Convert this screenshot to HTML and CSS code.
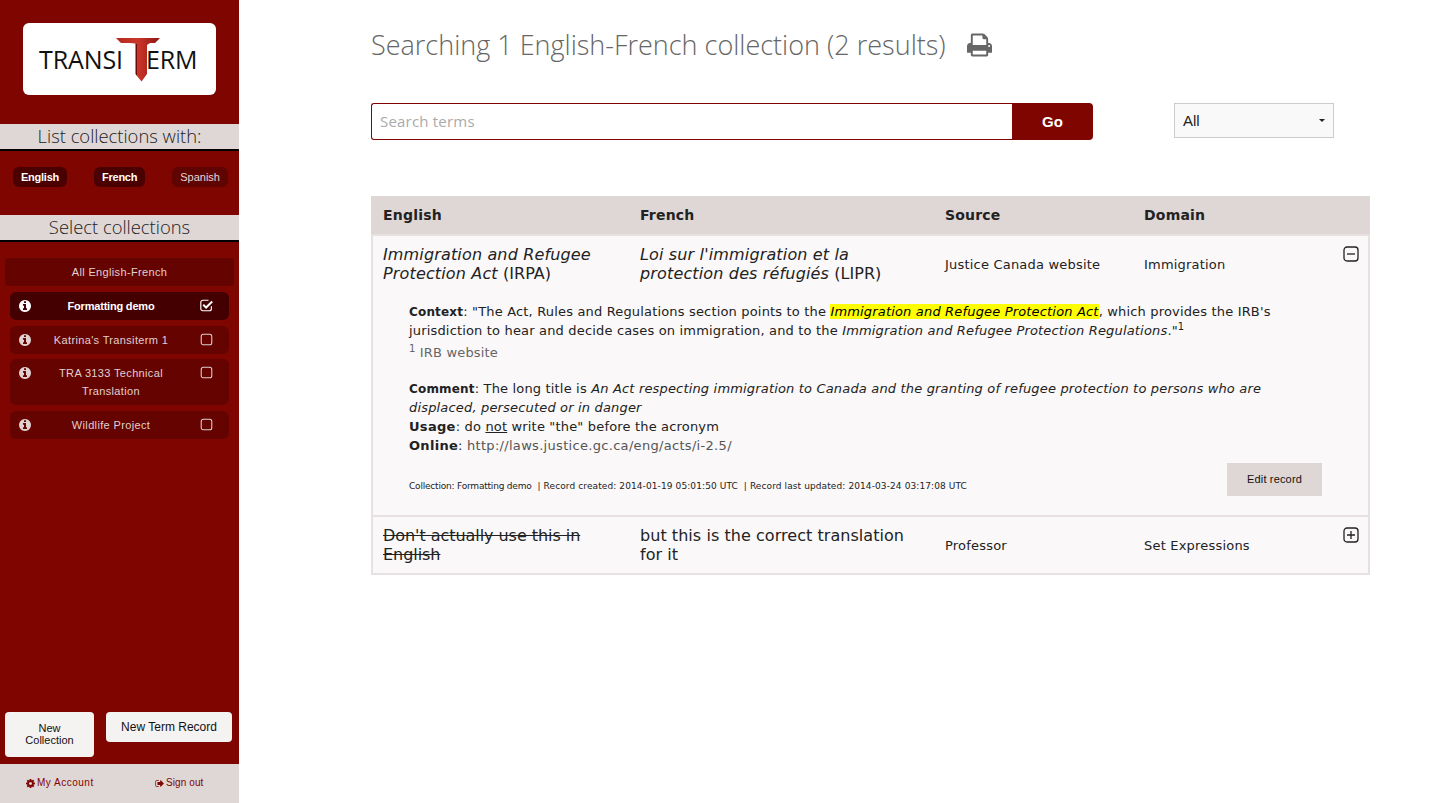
FILE: index.html
```html
<!DOCTYPE html>
<html lang="en">
<head>
    <meta charset="UTF-8">
    <title>Transiterm</title>
    <link rel="stylesheet" href="styles.css">
</head>
<body>
    <svg class="icon-defs" xmlns="http://www.w3.org/2000/svg">
        <symbol id="i-info" viewBox="0 0 1536 1536"><path d="M1024 1248v-160q0-14-9-23t-23-9h-96v-512q0-14-9-23t-23-9h-320q-14 0-23 9t-9 23v160q0 14 9 23t23 9h96v320h-96q-14 0-23 9t-9 23v160q0 14 9 23t23 9h448q14 0 23-9t9-23zm-128-896v-160q0-14-9-23t-23-9h-192q-14 0-23 9t-9 23v160q0 14 9 23t23 9h192q14 0 23-9t9-23zm640 416q0 209-103 385.500t-279.500 279.500-385.500 103-385.500-103-279.500-279.500-103-385.500 103-385.500 279.500-279.500 385.500-103 385.500 103 279.500 279.500 103 385.500z"/></symbol>
        <symbol id="i-cog" viewBox="128 128 1536 1536"><path d="M1152 896q0-106-75-181t-181-75-181 75-75 181 75 181 181 75 181-75 75-181zm512-109v222q0 12-8 23t-20 13l-185 28q-19 54-39 91 35 50 107 138 10 12 10 25t-9 23q-27 37-99 108t-94 71q-12 0-26-9l-138-108q-44 23-91 38-16 136-29 186-7 28-36 28h-222q-14 0-24.500-8.500t-11.500-21.500l-28-184q-49-16-90-37l-141 107q-10 9-25 9-14 0-25-11-126-114-165-168-7-10-7-23 0-12 8-23 15-21 51-66.500t54-70.500q-27-50-41-99l-183-27q-13-2-21-12.500t-8-23.500v-222q0-12 8-23t19-13l186-28q14-46 39-92-40-57-107-138-10-12-10-24 0-10 9-23 26-36 98.500-107.500t94.500-71.500q13 0 26 10l138 107q44-23 91-38 16-136 29-186 7-28 36-28h222q14 0 24.500 8.500t11.500 21.500l28 184q49 16 90 37l142-107q9-9 24-9 13 0 25 10 129 119 165 170 7 8 7 22 0 12-8 23-15 21-51 66.500t-54 70.500q26 50 41 98l183 28q13 2 21 12.500t8 23.500z"/></symbol>
        <symbol id="i-signout" viewBox="0 128 1664 1536"><path d="M704 1440q0 4 1 20t.5 26.500-3 23.500-10 19.500-20.500 6.500h-320q-119 0-203.500-84.500t-84.500-203.500v-704q0-119 84.500-203.500t203.500-84.500h320q13 0 22.500 9.500t9.500 22.500q0 4 1 20t.5 26.500-3 23.500-10 19.500-20.500 6.500h-320q-66 0-113 47t-47 113v704q0 66 47 113t113 47h312l11.500 1 11.500 3 8 5.500 7 9 2 13.500zm928-544q0 26-19 45l-544 544q-19 19-45 19t-45-19-19-45v-288h-448q-26 0-45-19t-19-45v-384q0-26 19-45t45-19h448v-288q0-26 19-45t45-19 45 19l544 544q19 19 19 45z"/></symbol>
        <symbol id="i-print" viewBox="0 128 1664 1536"><path d="M384 1536h896v-256h-896v256zm0-640h896v-384h-160q-40 0-68-28t-28-68v-160h-640v640zm1152 64q0-26-19-45t-45-19-45 19-19 45 19 45 45 19 45-19 19-45zm128 0v416q0 13-9.500 22.500t-22.500 9.500h-224v160q0 40-28 68t-68 28h-960q-40 0-68-28t-28-68v-160h-224q-13 0-22.500-9.500t-9.500-22.500v-416q0-79 56.500-135.500t135.500-56.500h64v-544q0-40 28-68t68-28h672q40 0 88 20t76 48l152 152q28 28 48 76t20 88v256h64q79 0 135.500 56.500t56.500 135.500z"/></symbol>
        <symbol id="i-box" viewBox="0 0 16 16"><rect x="1.500" y="1.500" width="13" height="13" rx="2.500" fill="none" stroke="currentColor" stroke-width="1.300"/></symbol>
        <symbol id="i-boxcheck" viewBox="0 0 16 16"><path d="M14 9v3a2.500 2.500 0 0 1-2.500 2.500h-8A2.500 2.500 0 0 1 1 12V4a2.500 2.500 0 0 1 2.500-2.500h7" fill="none" stroke="currentColor" stroke-width="1.400"/><path d="M4 7l3.500 3.500L15 3" fill="none" stroke="currentColor" stroke-width="2.400"/></symbol>
        <symbol id="i-minus" viewBox="0 0 16 16"><rect x="1" y="1" width="14" height="14" rx="3" fill="none" stroke="currentColor" stroke-width="1.300"/><path d="M4 8h8" stroke="currentColor" stroke-width="1.300"/></symbol>
        <symbol id="i-plus" viewBox="0 0 16 16"><rect x="1" y="1" width="14" height="14" rx="3" fill="none" stroke="currentColor" stroke-width="1.300"/><path d="M4 8h8M8 4v8" stroke="currentColor" stroke-width="1.300"/></symbol>
    </svg>

    <div class="page">
        <aside class="sidebar">
            <div class="logo">
                <span class="logo-text">TRANSI</span>
                <svg class="logo-t" viewBox="0 0 44 44" xmlns="http://www.w3.org/2000/svg">
                    <defs>
                        <linearGradient id="logoRed" x1="0" y1="0" x2="1" y2="0">
                            <stop offset="0" stop-color="#b5281e"/>
                            <stop offset="0.5" stop-color="#c9362a"/>
                            <stop offset="1" stop-color="#8e1510"/>
                        </linearGradient>
                    </defs>
                    <path d="M0 0h44l-5 5h-5l-3 2v29l-5.500 7.500L21 38V7l-2-1.500-5-.5H5z" fill="url(#logoRed)"/>
                    <path d="M19.500 6H21v32l-1.500-2z" fill="#6b0a08"/>
                </svg>
                <span class="logo-text">ERM</span>
            </div>

            <h2 class="side-title side-title-first">List collections with:</h2>
            <div class="lang-pills">
                <a class="pill active">English</a>
                <a class="pill active">French</a>
                <a class="pill">Spanish</a>
            </div>

            <h2 class="side-title">Select collections</h2>
            <a class="all-collections">All English-French</a>
            <ul class="collections">
                <li class="collection selected">
                    <svg class="ico-info"><use href="#i-info"/></svg>
                    <span class="collection-name">Formatting demo</span>
                    <svg class="ico-box"><use href="#i-boxcheck"/></svg>
                </li>
                <li class="collection">
                    <svg class="ico-info"><use href="#i-info"/></svg>
                    <span class="collection-name">Katrina's Transiterm 1</span>
                    <svg class="ico-box"><use href="#i-box"/></svg>
                </li>
                <li class="collection collection-tall">
                    <svg class="ico-info"><use href="#i-info"/></svg>
                    <span class="collection-name">TRA 3133 Technical Translation</span>
                    <svg class="ico-box"><use href="#i-box"/></svg>
                </li>
                <li class="collection">
                    <svg class="ico-info"><use href="#i-info"/></svg>
                    <span class="collection-name">Wildlife Project</span>
                    <svg class="ico-box"><use href="#i-box"/></svg>
                </li>
            </ul>

            <div class="side-actions">
                <a class="side-btn side-btn-collection">New Collection</a>
                <a class="side-btn side-btn-term">New Term Record</a>
            </div>
            <div class="side-footer">
                <a><svg class="ico-small"><use href="#i-cog"/></svg>My Account</a>
                <a><svg class="ico-small"><use href="#i-signout"/></svg>Sign out</a>
            </div>
        </aside>

        <main class="content">
            <div class="heading">
                <h1>Searching 1 English-French collection (2 results)</h1>
                <svg class="ico-print"><use href="#i-print"/></svg>
            </div>

            <div class="search-row">
                <form class="search-form">
                    <input class="search-input" type="text" placeholder="Search terms">
                    <button class="search-go" type="button">Go</button>
                </form>
                <div class="domain-select">
                    <span>All</span>
                    <i class="caret"></i>
                </div>
            </div>

            <table class="results">
                <colgroup>
                    <col class="col-english">
                    <col class="col-french">
                    <col class="col-source">
                    <col class="col-domain">
                    <col class="col-toggle">
                </colgroup>
                <thead>
                    <tr>
                        <th>English</th>
                        <th>French</th>
                        <th>Source</th>
                        <th>Domain</th>
                        <th></th>
                    </tr>
                </thead>
                <tbody>
                    <tr class="row-main open">
                        <td class="term"><em>Immigration and Refugee Protection Act</em> (IRPA)</td>
                        <td class="term"><em>Loi sur l'immigration et la protection des réfugiés</em> (LIPR)</td>
                        <td>Justice Canada website</td>
                        <td>Immigration</td>
                        <td class="toggle"><svg class="ico-toggle"><use href="#i-minus"/></svg></td>
                    </tr>
                    <tr class="row-detail">
                        <td colspan="5">
                            <p class="detail-text"><b>Context</b>: "The Act, Rules and Regulations section points to the <mark><em>Immigration and Refugee Protection Act</em></mark>, which provides the IRB's jurisdiction to hear and decide cases on immigration, and to the <em>Immigration and Refugee Protection Regulations</em>."<sup>1</sup></p>
                            <p class="footnote"><sup>1</sup> <span>IRB website</span></p>
                            <p class="detail-text detail-notes"><b>Comment</b>: The long title is <em>An Act respecting immigration to Canada and the granting of refugee protection to persons who are displaced, persecuted or in danger</em><br>
                            <b class="big">Usage</b>: do <u>not</u> write "the" before the acronym<br>
                            <b class="big">Online</b>: <a class="link">http://laws.justice.gc.ca/eng/acts/i-2.5/</a></p>
                            <div class="record-meta">
                                <span class="meta-text"><span class="meta-collection">Collection: Formatting demo</span> &nbsp;| Record created: 2014-01-19 05:01:50 UTC &nbsp;| Record last updated: 2014-03-24 03:17:08 UTC</span>
                                <a class="edit-btn">Edit record</a>
                            </div>
                        </td>
                    </tr>
                    <tr class="row-main last">
                        <td class="term"><s>Don't actually use this in English</s></td>
                        <td class="term">but this is the correct translation for it</td>
                        <td>Professor</td>
                        <td>Set Expressions</td>
                        <td class="toggle"><svg class="ico-toggle"><use href="#i-plus"/></svg></td>
                    </tr>
                </tbody>
            </table>
        </main>
    </div>
</body>
</html>
```

FILE: styles.css
```css
* {
    box-sizing: border-box;
}
html, body {
    margin: 0;
    height: 100%;
}
body {
    font-family: "DejaVu Sans", Verdana, sans-serif;
    color: #222;
    background: #fff;
    overflow: hidden;
}
.icon-defs {
    display: none;
}
.page {
    display: flex;
    height: 803px;
}

/* sidebar */
.sidebar {
    width: 239px;
    flex: none;
    display: flex;
    flex-direction: column;
    background: #7f0500;
    font-family: "Liberation Sans", Arial, sans-serif;
}
.logo {
    display: flex;
    align-items: center;
    width: 193px;
    height: 72px;
    margin: 23px 0 0 23px;
    padding: 1px 0 0 16px;
    background: #fff;
    border-radius: 6px;
}
.logo-text {
    font-family: "Open Sans", sans-serif;
    font-size: 25px;
    line-height: 1;
    letter-spacing: -0.1px;
    color: #111;
}
.logo-t {
    width: 44px;
    height: 44px;
    flex: none;
    margin: 0 -14px 0 -7px;
}
.side-title {
    height: 27px;
    margin: 0;
    background: #dfd6d6;
    border-bottom: 2px solid #000;
    font-family: "Open Sans", sans-serif;
    font-size: 18.4px;
    font-weight: 300;
    line-height: 24px;
    text-align: center;
    color: #222;
}
.side-title-first {
    margin-top: 29px;
}
.lang-pills {
    display: flex;
    justify-content: space-between;
    height: 64px;
    padding: 16px 11px 0 13px;
}
.pill {
    height: 20px;
    padding: 0 8px;
    border-radius: 6px;
    background: #600402;
    color: #e4d6d6;
    font-size: 11px;
    line-height: 20px;
}
.pill.active {
    background: #4a0000;
    color: #fff;
    font-weight: 700;
    letter-spacing: -0.25px;
}
.all-collections {
    display: block;
    height: 28px;
    margin: 16px 5px 6px;
    border-radius: 4px;
    background: #650300;
    color: #e0d0d0;
    font-size: 11px;
    letter-spacing: 0.35px;
    line-height: 28px;
    text-align: center;
}
.collections {
    list-style: none;
    margin: 0;
    padding: 0 10px;
    display: flex;
    flex-direction: column;
    gap: 6px;
}
.collection {
    display: flex;
    align-items: flex-start;
    min-height: 28px;
    padding: 5px 16px 4px 9px;
    border-radius: 6px;
    background: #650300;
    color: #e0d0d0;
    font-size: 11px;
    letter-spacing: 0.35px;
    line-height: 18px;
}
.collection-tall {
    margin-top: -1px;
    padding-bottom: 5px;
}
.collection.selected {
    background: #440000;
    color: #fff;
    font-weight: 700;
    letter-spacing: -0.2px;
}
.collection-name {
    flex: 1;
    padding: 0 17px 0 8px;
    text-align: center;
}
.ico-info {
    width: 12px;
    height: 12px;
    margin-top: 3px;
    flex: none;
    fill: currentColor;
}
.ico-box {
    width: 13px;
    height: 13px;
    margin-top: 2px;
    flex: none;
}
.side-actions {
    display: flex;
    align-items: flex-start;
    justify-content: space-between;
    margin-top: auto;
    padding: 0 7px 7px 5px;
}
.side-btn {
    border-radius: 4px;
    background: #f5f2f2;
    color: #111;
    text-align: center;
}
.side-btn-collection {
    width: 89px;
    height: 45px;
    padding: 10px 16px 0;
    font-size: 11px;
    line-height: 12px;
}
.side-btn-term {
    width: 126px;
    height: 30px;
    font-size: 12px;
    line-height: 30px;
}
.side-footer {
    display: flex;
    height: 39px;
    padding: 12px 0 0 26px;
    background: #dfd6d6;
    color: #7f0500;
    font-size: 10px;
    line-height: 14px;
}
.side-footer a {
    display: flex;
    align-items: center;
    gap: 2px;
    height: 14px;
    letter-spacing: 0.1px;
}
.side-footer a:first-child {
    width: 129px;
    letter-spacing: 0.5px;
}
.ico-small {
    width: 9px;
    height: 9px;
    fill: currentColor;
}

/* main */
.content {
    flex: 1;
    padding: 23px 66px 0 132px;
}
.heading {
    display: flex;
    align-items: center;
    gap: 21px;
    height: 44px;
}
.heading h1 {
    margin: 0;
    font-family: "Open Sans", sans-serif;
    font-size: 27px;
    font-weight: 300;
    line-height: 44px;
    color: #666;
}
.ico-print {
    width: 25px;
    height: 24px;
    fill: #666;
}
.search-row {
    display: flex;
    align-items: flex-start;
    margin-top: 36px;
}
.search-form {
    display: flex;
    width: 722px;
    height: 37px;
}
.search-input {
    flex: 1;
    min-width: 0;
    padding: 0 8px 2px;
    border: 1px solid #7f0500;
    border-right: 0;
    border-radius: 3px 0 0 3px;
    font-family: "Open Sans", sans-serif;
    font-size: 15px;
    letter-spacing: 0.2px;
    outline: none;
}
.search-input::placeholder {
    color: #aaa;
}
.search-go {
    width: 81px;
    border: 0;
    border-radius: 0 4px 4px 0;
    background: #7f0500;
    color: #fff;
    font-family: "Liberation Sans", Arial, sans-serif;
    font-size: 15px;
    font-weight: 700;
}
.domain-select {
    display: flex;
    align-items: center;
    justify-content: space-between;
    width: 160px;
    height: 35px;
    margin-left: 81px;
    padding: 0 8px;
    border: 1px solid #ccc;
    background: #f9f9f9;
    font-family: "Liberation Sans", Arial, sans-serif;
    font-size: 15px;
    color: #222;
}
.caret {
    border: 3px solid transparent;
    border-top: 3px solid #222;
    border-bottom: 0;
}

/* results table */
.results {
    width: 999px;
    margin-top: 56px;
    table-layout: fixed;
    border-collapse: separate;
    border-spacing: 0;
    background: #faf8f9;
}
.col-english { width: 257px; }
.col-french { width: 305px; }
.col-source { width: 199px; }
.col-domain { width: 211px; }
.results th {
    height: 38px;
    padding: 0 12px;
    background: #dfd6d6;
    font-size: 14px;
    font-weight: 700;
    letter-spacing: 0.2px;
    text-align: left;
    color: #222;
}
.results td {
    padding: 0 12px;
    font-size: 13px;
    letter-spacing: 0.2px;
}
.row-main td {
    border-top: 2px solid #e8e1e1;
    height: 60px;
    padding-top: 3px;
    padding-bottom: 3px;
}
.row-main td:first-child {
    border-left: 2px solid #e8e1e1;
    padding-left: 10px;
}
.row-main td:last-child {
    border-right: 2px solid #e8e1e1;
}
.row-main.open td {
    height: 56px;
    padding-top: 8px;
    padding-bottom: 5px;
}
.row-main.last td {
    border-bottom: 2px solid #e8e1e1;
}
.results td.term {
    font-size: 16px;
    line-height: 19px;
    letter-spacing: 0.05px;
    color: #222;
}
.row-main.open td.term {
    padding-top: 7px;
    padding-bottom: 6px;
}
.term em {
    letter-spacing: 0.15px;
}
.term s {
    letter-spacing: -0.05px;
}
.results .toggle,
.row-main.open .toggle {
    padding: 10px 0 0 0;
    vertical-align: top;
}
.ico-toggle {
    display: block;
    width: 16px;
    height: 16px;
    color: #222;
}
.results .row-detail td {
    padding: 12px 46px 19px 36px;
    border-left: 2px solid #e8e1e1;
    border-right: 2px solid #e8e1e1;
    font-size: 13px;
    letter-spacing: 0.17px;
    line-height: 19px;
}
.detail-text {
    margin: 0;
}
.detail-text b {
    font-size: 12px;
    line-height: 0;
}
.detail-text mark {
    background: #ff0;
}
.detail-text sup, .footnote sup {
    font-size: 10px;
    line-height: 0;
}
.footnote {
    margin: 3px 0 0;
    color: #666;
}
.detail-notes {
    margin-top: 17px;
}
.detail-text .big {
    font-size: 13px;
    letter-spacing: 0.3px;
}
.link {
    color: #555;
    letter-spacing: 0.31px;
}
.record-meta {
    display: flex;
    align-items: flex-end;
    justify-content: space-between;
    margin-top: 8px;
}
.meta-text {
    padding-bottom: 3px;
    font-size: 9px;
    letter-spacing: 0.1px;
    line-height: 14px;
}
.meta-collection {
    letter-spacing: -0.2px;
}
.edit-btn {
    width: 95px;
    height: 33px;
    background: #dfd6d6;
    color: #111;
    font-family: "Liberation Sans", Arial, sans-serif;
    font-size: 11px;
    line-height: 33px;
    text-align: center;
}
```
